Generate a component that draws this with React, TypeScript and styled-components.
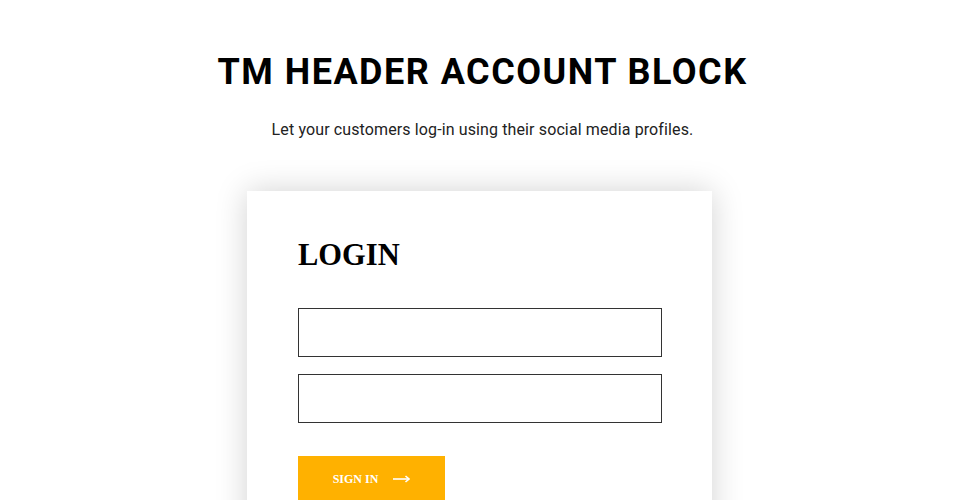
import React from "react";
import styled, { createGlobalStyle } from "styled-components";

const Global = createGlobalStyle`
  html, body { margin: 0; padding: 0; background: #fff; }
  * { box-sizing: border-box; }
`;

const Page = styled.div`
  display: flex;
  flex-direction: column;
  align-items: center;
  padding-top: 51px;
  font-family: Roboto, "Liberation Sans", sans-serif;
`;

const Title = styled.h1`
  margin: 0;
  font-family: Roboto, sans-serif;
  font-weight: 700;
  font-size: 36px;
  line-height: 42px;
  letter-spacing: 1.5px;
  color: #000;
`;

const Subtitle = styled.p`
  margin: 27px 0 0;
  font-size: 16px;
  line-height: 20px;
  letter-spacing: 0.12px;
  color: #222;
`;

const Card = styled.div`
  margin: 51px 6px 0 0;
  width: 465px;
  background: #fff;
  box-shadow: 0 0 30px rgba(0, 0, 0, 0.18);
  padding: 45px 51px 40px;
  display: flex;
  flex-direction: column;
`;

const Heading = styled.h2`
  margin: 0;
  font-family: "Liberation Serif", serif;
  font-weight: 700;
  font-size: 30.5px;
  line-height: 38px;
  color: #000;
`;

const Form = styled.form`
  margin-top: 34px;
  display: flex;
  flex-direction: column;
  gap: 17px;
`;

const Input = styled.input`
  width: 364px;
  height: 49px;
  border: 1px solid #333;
  border-radius: 0;
  outline: none;
  background: #fff;
  padding: 0 12px;
`;

const Button = styled.button`
  margin-top: 16px;
  width: 147px;
  height: 46px;
  background: #ffb100;
  border: none;
  color: #fff;
  font-family: "Liberation Serif", serif;
  font-weight: 700;
  font-size: 12px;
  display: flex;
  align-items: center;
  justify-content: center;
  gap: 15px;
  padding: 0;
  cursor: pointer;
`;

export default function App() {
  return (
    <>
      <Global />
      <Page>
        <Title>TM HEADER ACCOUNT BLOCK</Title>
        <Subtitle>Let your customers log-in using their social media profiles.</Subtitle>
        <Card>
          <Heading>LOGIN</Heading>
          <Form onSubmit={(e) => e.preventDefault()}>
            <Input type="text" />
            <Input type="password" />
            <Button type="submit">
              SIGN IN
              <svg width="17" height="8" viewBox="0 0 17 8" fill="none">
                <path d="M0 4H15.5" stroke="#fff" strokeWidth="1.6" />
                <path d="M12.5 1L16 4L12.5 7" stroke="#fff" strokeWidth="1.6" />
              </svg>
            </Button>
          </Form>
        </Card>
      </Page>
    </>
  );
}
